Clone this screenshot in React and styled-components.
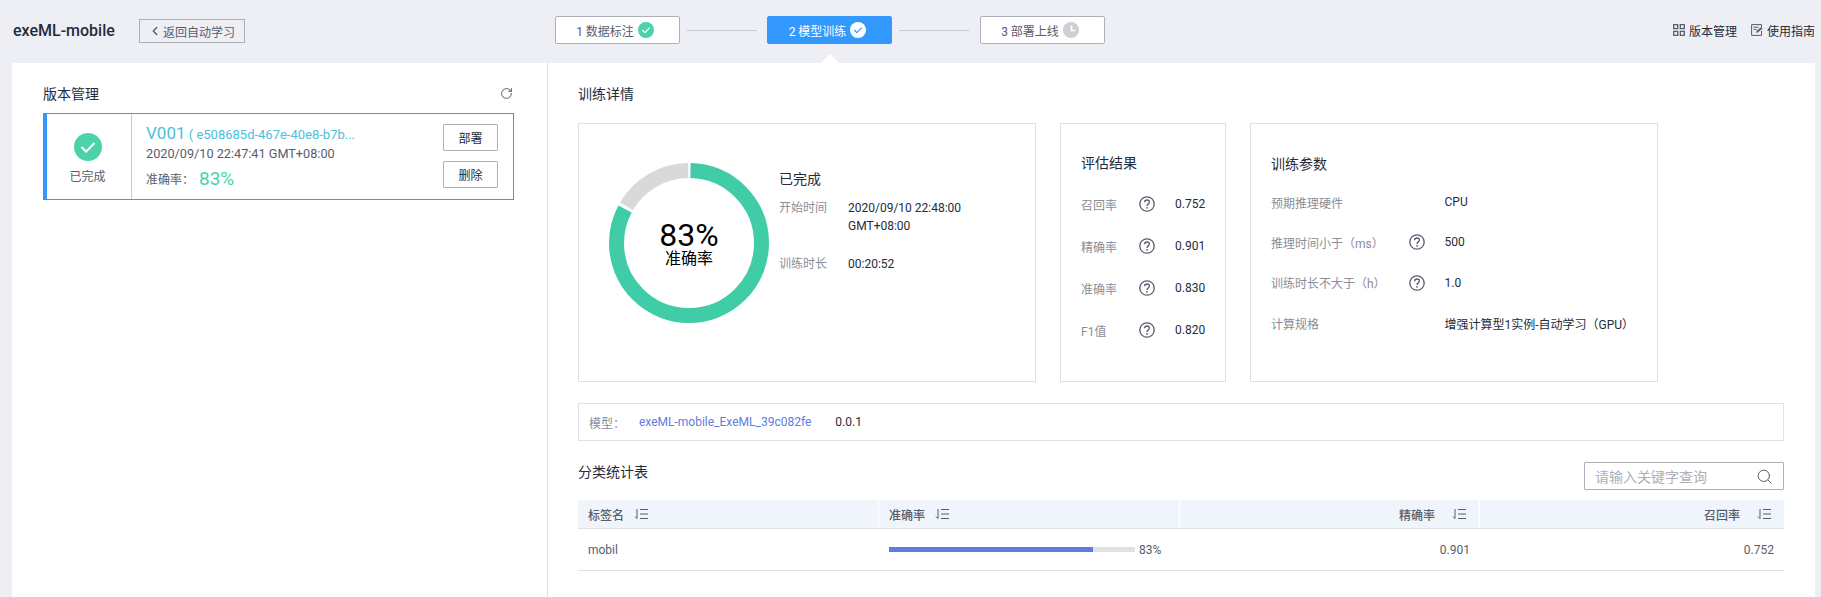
import styled, { createGlobalStyle } from "styled-components";
import { ChevronLeft, RotateCw, Search } from "lucide-react";

const GlobalStyle = createGlobalStyle`
  * {
    box-sizing: border-box;
  }

  html,
  body {
    margin: 0;
    height: 100%;
    overflow: hidden;
    background: #eeeff5;
    font-family: "Roboto", "Noto Sans CJK SC", sans-serif;
    font-size: 12px;
    color: #252b3a;
  }
`;

const steps = [
  { label: "1 数据标注", state: "done" },
  { label: "2 模型训练", state: "active" },
  { label: "3 部署上线", state: "wait" },
];

const evalRows = [
  { label: "召回率", value: "0.752" },
  { label: "精确率", value: "0.901" },
  { label: "准确率", value: "0.830" },
  { label: "F1值", value: "0.820" },
];

const paramRows = [
  { label: "预期推理硬件", value: "CPU" },
  { label: "推理时间小于（ms）", value: "500", help: true },
  { label: "训练时长不大于（h）", value: "1.0", help: true },
  { label: "计算规格", value: "增强计算型1实例-自动学习（GPU）" },
];

const columns = [
  { title: "标签名" },
  { title: "准确率" },
  { title: "精确率", right: true },
  { title: "召回率", right: true },
];

function CheckDot({ size, bg, stroke }) {
  return (
    <svg width={size} height={size} viewBox="0 0 28 28">
      <circle cx="14" cy="14" r="14" fill={bg} />
      <path d="M7.5 14l4.6 4.6 8.4-8.6" fill="none" stroke={stroke} strokeWidth="2" />
    </svg>
  );
}

function ClockDot() {
  return (
    <svg width="16" height="16" viewBox="0 0 16 16">
      <circle cx="8" cy="8" r="8" fill="#cfcfcf" />
      <path d="M8.5 3.5v5h3.8" fill="none" stroke="#fff" strokeWidth="1.6" />
    </svg>
  );
}

function HelpIcon() {
  return (
    <svg width="16" height="16" viewBox="0 0 16 16">
      <circle cx="8" cy="8" r="7.2" fill="none" stroke="#575d6c" strokeWidth="1.3" />
      <path
        d="M5.6 6.2C5.7 4.7 6.7 4 8 4c1.4 0 2.4.9 2.4 2.1 0 1-.6 1.5-1.3 2-.7.5-1.1.9-1.1 1.8"
        fill="none"
        stroke="#575d6c"
        strokeWidth="1.3"
      />
      <circle cx="8" cy="11.8" r=".9" fill="#575d6c" />
    </svg>
  );
}

function SortIcon() {
  return (
    <svg width="15" height="12" viewBox="0 0 15 12">
      <path d="M3 1v9.5M1 8.6l2 2" fill="none" stroke="#575d6c" strokeWidth="1" />
      <path d="M6 1.5h8M6 6h8M6 10.5h8" fill="none" stroke="#575d6c" strokeWidth="1.2" />
    </svg>
  );
}

function GridIcon() {
  return (
    <svg width="12" height="12" viewBox="0 0 12 12">
      <path
        d="M.7.7h4v4h-4zM7.3.7h4v4h-4zM.7 7.3h4v4h-4zM7.3 7.3h4v4h-4z"
        fill="none"
        stroke="#575d6c"
        strokeWidth="1.3"
      />
    </svg>
  );
}

function GuideIcon() {
  return (
    <svg width="12" height="12" viewBox="0 0 12 12">
      <path d="M10.5 3V.6H.6v10.8h9.9V7" fill="none" stroke="#575d6c" strokeWidth="1" />
      <path d="M2.5 3.2h5M2.5 5.4h3" stroke="#575d6c" strokeWidth="1" />
      <path d="M5 9l.7-2.2L10.2 3l1.4 1.4L7 8.2z" fill="#575d6c" />
    </svg>
  );
}

function Donut() {
  const r = 72.5;
  const c = 2 * Math.PI * r;
  const gap = 3;
  return (
    <DonutWrap>
      <svg width="160" height="160" viewBox="0 0 160 160">
        <g transform="rotate(-90 80 80)" fill="none" strokeWidth="15">
          <circle
            cx="80"
            cy="80"
            r={r}
            stroke="#d9d9d9"
            strokeDasharray={`${c * 0.17 - gap} ${c}`}
            strokeDashoffset={-(c * 0.83 + gap / 2)}
          />
          <circle
            cx="80"
            cy="80"
            r={r}
            stroke="#3fcca6"
            strokeDasharray={`${c * 0.83 - gap} ${c}`}
            strokeDashoffset={-gap / 2}
          />
        </g>
      </svg>
      <DonutText>
        <strong>83%</strong>
        <span>准确率</span>
      </DonutText>
    </DonutWrap>
  );
}

export default function App() {
  return (
    <Page>
      <GlobalStyle />
      <Header>
        <HeaderLeft>
          <ProjectName>exeML-mobile</ProjectName>
          <BackButton>
            <ChevronLeft size={14} strokeWidth={2.4} />
            返回自动学习
          </BackButton>
        </HeaderLeft>

        <Steps>
          {steps.map((step, index) => (
            <StepGroup key={step.label}>
              {index > 0 && <StepLine />}
              <Step $active={step.state === "active"}>
                {step.label}
                {step.state === "done" && <CheckDot size={16} bg="#4cd2a8" stroke="#fff" />}
                {step.state === "active" && <CheckDot size={16} bg="#fff" stroke="#3399ff" />}
                {step.state === "wait" && <ClockDot />}
              </Step>
            </StepGroup>
          ))}
        </Steps>

        <HeaderTools>
          <ToolLink>
            <GridIcon />
            版本管理
          </ToolLink>
          <ToolLink>
            <GuideIcon />
            使用指南
          </ToolLink>
        </HeaderTools>
      </Header>

      <Main>
        <LeftPanel>
          <PanelTitle>
            版本管理
            <RotateCw size={13} color="#575d6c" strokeWidth={1.8} />
          </PanelTitle>

          <VersionCard>
            <VersionStatus>
              <CheckDot size={28} bg="#4cd2a8" stroke="#fff" />
              <span>已完成</span>
            </VersionStatus>
            <VersionInfo>
              <VersionName>
                <b>V001</b> ( e508685d-467e-40e8-b7b...
              </VersionName>
              <VersionTime>2020/09/10 22:47:41 GMT+08:00</VersionTime>
              <VersionScore>
                准确率：<b>83%</b>
              </VersionScore>
            </VersionInfo>
            <VersionActions>
              <SmallButton>部署</SmallButton>
              <SmallButton>删除</SmallButton>
            </VersionActions>
          </VersionCard>
        </LeftPanel>

        <RightPanel>
          <PanelTitle>训练详情</PanelTitle>

          <Boxes>
            <SummaryBox>
              <Donut />
              <SummaryInfo>
                <SummaryStatus>已完成</SummaryStatus>
                <SummaryRow>
                  <dt>开始时间</dt>
                  <dd>2020/09/10 22:48:00 GMT+08:00</dd>
                </SummaryRow>
                <SummaryRow>
                  <dt>训练时长</dt>
                  <dd>00:20:52</dd>
                </SummaryRow>
              </SummaryInfo>
            </SummaryBox>

            <EvalBox>
              <BoxTitle>评估结果</BoxTitle>
              {evalRows.map((row) => (
                <EvalRow key={row.label}>
                  <Muted>{row.label}</Muted>
                  <HelpIcon />
                  <span>{row.value}</span>
                </EvalRow>
              ))}
            </EvalBox>

            <ParamBox>
              <BoxTitle $tight>训练参数</BoxTitle>
              {paramRows.map((row) => (
                <ParamRow key={row.label}>
                  <Muted>{row.label}</Muted>
                  {row.help ? <HelpIcon /> : <i />}
                  <span>{row.value}</span>
                </ParamRow>
              ))}
            </ParamBox>
          </Boxes>

          <ModelBar>
            <Muted>模型：</Muted>
            <ModelLink>exeML-mobile_ExeML_39c082fe</ModelLink>
            <span>0.0.1</span>
          </ModelBar>

          <TableTop>
            <TableTitle>分类统计表</TableTitle>
            <SearchBox>
              <span>请输入关键字查询</span>
              <Search size={17} color="#575d6c" strokeWidth={1.4} />
            </SearchBox>
          </TableTop>

          <TableHead>
            {columns.map((col) => (
              <HeadCell key={col.title} $right={col.right}>
                {col.title}
                <SortIcon />
              </HeadCell>
            ))}
          </TableHead>
          <TableRow>
            <BodyCell>mobil</BodyCell>
            <BodyCell>
              <BarTrack>
                <BarFill style={{ width: "83%" }} />
              </BarTrack>
              83%
            </BodyCell>
            <BodyCell $right>0.901</BodyCell>
            <BodyCell $right>0.752</BodyCell>
          </TableRow>
        </RightPanel>
      </Main>
    </Page>
  );
}

const Page = styled.div`
  width: 1821px;
  height: 597px;
  overflow: hidden;
  display: flex;
  flex-direction: column;
`;

const Header = styled.header`
  height: 63px;
  flex: none;
  display: grid;
  grid-template-columns: 541.5px auto 1fr;
  align-items: flex-start;
  padding: 16px 6px 0 13px;
`;

const HeaderLeft = styled.div`
  display: flex;
  align-items: center;
  height: 28px;
  gap: 23px;
`;

const ProjectName = styled.div`
  font-size: 16px;
  font-weight: 500;
  color: #252b3a;
  width: 103px;
  white-space: nowrap;
`;

const BackButton = styled.div`
  display: flex;
  align-items: center;
  gap: 1px;
  height: 24px;
  width: 106px;
  padding-left: 8px;
  border: 1px solid #adb0b8;
  color: #575d6c;
  font-size: 12px;
  white-space: nowrap;
  margin-top: 2px;
`;

const Steps = styled.div`
  display: flex;
  align-items: center;
`;

const StepGroup = styled.div`
  display: flex;
  align-items: center;
`;

const StepLine = styled.div`
  width: 70px;
  height: 1px;
  margin: 0 10.5px 0 7px;
  background: #c8cad0;
`;

const Step = styled.div`
  position: relative;
  display: flex;
  align-items: center;
  justify-content: center;
  gap: 4px;
  width: 125px;
  height: 28px;
  padding-right: 4px;
  border: 1px solid ${(props) => (props.$active ? "#3399ff" : "#adb0b8")};
  border-radius: 2px;
  background: ${(props) => (props.$active ? "#3399ff" : "#fff")};
  color: ${(props) => (props.$active ? "#fff" : "#575d6c")};
  font-size: 12px;

  ${(props) =>
    props.$active &&
    `
    &::after {
      content: "";
      position: absolute;
      left: 50%;
      bottom: -20px;
      margin-left: -9px;
      border: 9px solid transparent;
      border-top-width: 0;
      border-bottom-color: #fff;
    }
  `}
`;

const HeaderTools = styled.div`
  display: flex;
  justify-content: flex-end;
  gap: 14px;
  height: 28px;
`;

const ToolLink = styled.div`
  display: flex;
  align-items: center;
  gap: 4px;
  font-size: 12px;
  color: #252b3a;
`;

const Main = styled.main`
  flex: 1;
  display: flex;
  margin: 0 6px 0 12px;
  background: #fff;
`;

const LeftPanel = styled.section`
  width: 536px;
  flex: none;
  padding: 15px 33px 0 31px;
  border-right: 1px solid #dfe1e6;
`;

const RightPanel = styled.section`
  flex: 1;
  padding: 15px 31px 0 30px;
`;

const PanelTitle = styled.div`
  display: flex;
  align-items: center;
  justify-content: space-between;
  height: 30px;
  padding-right: 1px;
  margin-bottom: 5px;
  font-size: 14px;
  color: #252b3a;
`;

const VersionCard = styled.div`
  display: flex;
  height: 87px;
  border: 1px solid #3399ff;
  border-left-width: 4px;
`;

const VersionStatus = styled.div`
  width: 85px;
  flex: none;
  display: flex;
  flex-direction: column;
  align-items: center;
  padding: 19px 3px 0 0;
  gap: 6px;
  border-right: 1px solid #c8cad0;
  font-size: 12px;
  color: #575d6c;
`;

const VersionInfo = styled.div`
  flex: 1;
  padding: 7px 0 0 14px;
  min-width: 0;
`;

const VersionName = styled.div`
  height: 24px;
  line-height: 24px;
  font-size: 13px;
  color: #4cc0dc;
  white-space: nowrap;

  b {
    font-size: 17px;
    font-weight: 400;
  }
`;

const VersionTime = styled.div`
  height: 18px;
  line-height: 18px;
  font-size: 12.7px;
  color: #575d6c;
  white-space: nowrap;
`;

const VersionScore = styled.div`
  display: flex;
  align-items: center;
  gap: 5px;
  height: 24px;
  margin-top: 3px;
  font-size: 12px;
  color: #575d6c;

  b {
    font-size: 19px;
    font-weight: 400;
    color: #4cd2a8;
  }
`;

const VersionActions = styled.div`
  width: 70px;
  flex: none;
  display: flex;
  flex-direction: column;
  gap: 10px;
  padding-top: 10px;
`;

const SmallButton = styled.div`
  width: 55px;
  height: 27px;
  display: flex;
  align-items: center;
  justify-content: center;
  border: 1px solid #adb0b8;
  border-radius: 1px;
  font-size: 12px;
  color: #252b3a;
`;

const Boxes = styled.div`
  display: flex;
  gap: 24px;
  margin-top: 15px;
`;

const Box = styled.div`
  height: 259px;
  border: 1px solid #dfe1e6;
`;

const SummaryBox = styled(Box)`
  width: 458px;
  display: flex;
  padding: 39px 0 0 30px;
`;

const DonutWrap = styled.div`
  position: relative;
  width: 160px;
  height: 160px;
  flex: none;
`;

const DonutText = styled.div`
  position: absolute;
  inset: 0;
  display: flex;
  flex-direction: column;
  align-items: center;
  justify-content: center;
  color: #000;

  strong {
    font-size: 32px;
    font-weight: 400;
    line-height: 30px;
  }

  span {
    font-size: 16px;
    line-height: 17px;
  }
`;

const SummaryInfo = styled.dl`
  margin: 6px 0 0 10px;
`;

const SummaryStatus = styled.div`
  height: 20px;
  line-height: 20px;
  margin-bottom: 10px;
  font-size: 14px;
`;

const SummaryRow = styled.div`
  display: grid;
  grid-template-columns: 69px 140px;
  line-height: 18px;
  margin-bottom: 20px;

  dt {
    color: #8a8e99;
  }

  dd {
    margin: 0;
  }
`;

const EvalBox = styled(Box)`
  width: 166px;
  padding: 29px 0 0 20px;
`;

const ParamBox = styled(Box)`
  width: 408px;
  padding: 30px 0 0 20px;
`;

const BoxTitle = styled.div`
  height: 20px;
  line-height: 20px;
  margin-bottom: ${(props) => (props.$tight ? "8px" : "10px")};
  font-size: 14px;
`;

const Muted = styled.span`
  color: #8a8e99;
  white-space: nowrap;
`;

const EvalRow = styled.div`
  display: grid;
  grid-template-columns: 58px 36px auto;
  align-items: center;
  height: 42px;
`;

const ParamRow = styled.div`
  display: grid;
  grid-template-columns: 137.5px 36px auto;
  align-items: center;
  height: 40.33px;
  white-space: nowrap;
`;

const ModelBar = styled.div`
  display: flex;
  align-items: center;
  height: 38px;
  margin-top: 21px;
  padding-left: 10px;
  border: 1px solid #dfe1e6;

  ${Muted} {
    width: 50px;
  }
`;

const ModelLink = styled.span`
  margin-right: 24px;
  color: #5e7ce0;
`;

const TableTop = styled.div`
  display: flex;
  justify-content: space-between;
  align-items: flex-start;
  margin-top: 21px;
`;

const TableTitle = styled.div`
  font-size: 14px;
  line-height: 20px;
`;

const SearchBox = styled.div`
  width: 200px;
  height: 28px;
  display: flex;
  align-items: center;
  justify-content: space-between;
  padding: 0 10px;
  border: 1px solid #adb0b8;
  border-radius: 1px;
  font-size: 14px;
  color: #adb0b8;
`;

const tableColumns = "301px 300.5px 300.5px 1fr";

const TableHead = styled.div`
  display: grid;
  grid-template-columns: ${tableColumns};
  height: 29px;
  margin-top: 10px;
  background: #f0f4fb;
  border-bottom: 1px solid #dfe1e6;
`;

const HeadCell = styled.div`
  display: flex;
  align-items: center;
  justify-content: ${(props) => (props.$right ? "flex-end" : "flex-start")};
  gap: ${(props) => (props.$right ? "17px" : "10px")};
  padding: 0 12px 0 10px;
  border-right: 1px solid #fff;
  color: #575d6c;
  font-weight: 500;

  &:last-child {
    border-right: 0;
  }
`;

const TableRow = styled.div`
  display: grid;
  grid-template-columns: ${tableColumns};
  height: 42px;
  border-bottom: 1px solid #dfe1e6;
`;

const BodyCell = styled.div`
  display: flex;
  align-items: center;
  justify-content: ${(props) => (props.$right ? "flex-end" : "flex-start")};
  padding: 0 10px;
  gap: 4px;
  color: #575d6c;
`;

const BarTrack = styled.div`
  width: 246px;
  height: 5px;
  background: #dfe1e6;
`;

const BarFill = styled.div`
  height: 100%;
  background: #5e7ce0;
`;
